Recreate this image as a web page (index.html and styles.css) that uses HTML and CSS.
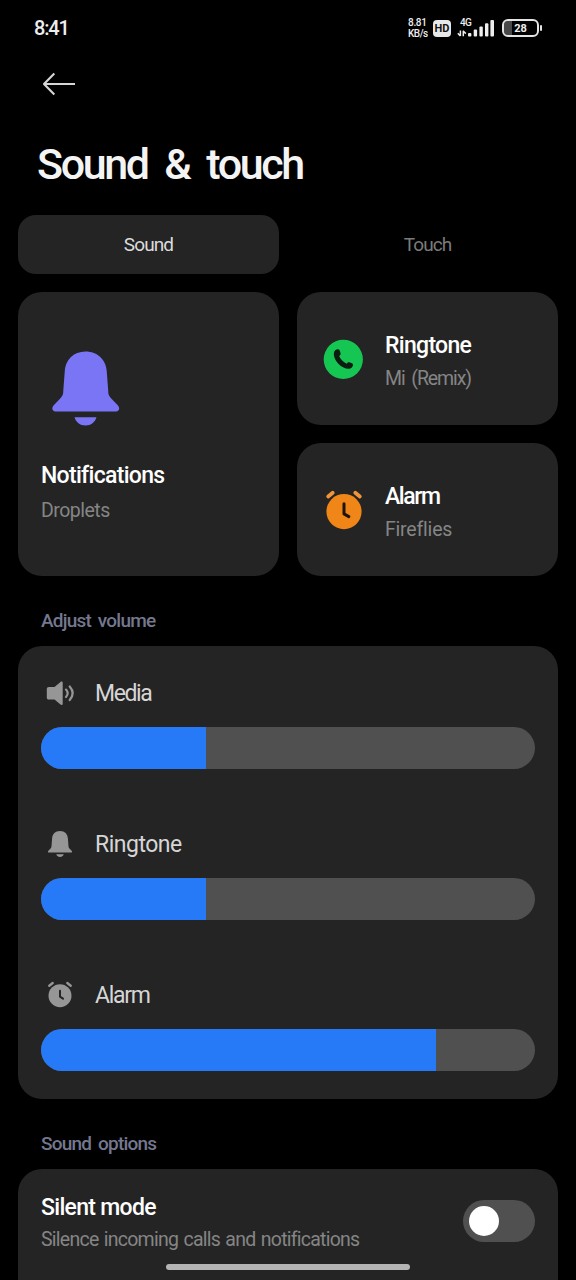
FILE: index.html
```html
<!DOCTYPE html>
<html lang="en">
<head>
<meta charset="utf-8">
<title>Sound &amp; touch</title>
<link rel="stylesheet" href="styles.css">
</head>
<body>
<div class="screen">
  <header class="status">
    <span class="clock">8:41</span>
    <div class="indicators">
      <div class="speed"><span class="speed-value">8.81</span><span>KB/s</span></div>
      <span class="hd">HD</span>
      <div class="network">
        <span class="network-type">4G</span>
        <svg class="signal" width="38" height="18" viewBox="0 0 38 18">
          <g fill="none" stroke="#eee" stroke-width="1.5"><path d="M3.400 11.500v5.500M.8 14.200l2.600 2.800M6.300 17.300v-5.500M6 11.800l2.800 2.800"/></g>
          <g fill="#eee"><rect x="11" y="14" width="3.400" height="3.600" rx="1"/><rect x="16.700" y="10.500" width="3.400" height="7.100" rx="1"/><rect x="22.400" y="7.500" width="3.400" height="10.100" rx="1"/><rect x="28" y="4.300" width="3.400" height="13.300" rx="1"/><rect x="33.400" y="1" width="3.600" height="16.600" rx="1"/></g>
        </svg>
      </div>
      <div class="battery"><span class="battery-body">28</span><span class="battery-tip"></span></div>
    </div>
  </header>

  <nav class="back">
    <svg width="34" height="24" viewBox="0 0 34 24" fill="none" stroke="#d6d6d6" stroke-width="2.100" stroke-linejoin="round"><path d="M33 12H2M12.300 1.400 2 12l10.300 10.600"/></svg>
  </nav>
  <h1 class="title">Sound &amp; touch</h1>

  <div class="tabs">
    <span class="tab tab-active">Sound</span>
    <span class="tab">Touch</span>
  </div>

  <main>
    <div class="tiles">
      <section class="card tile-large">
        <svg class="bell-large" width="68" height="76" viewBox="0 0 68 76" fill="#7a75f4"><path d="M33.500 1.500C21.500 1.500 13 10 12.700 22L11.300 40.500C11.300 44.500 10.500 46 8 48.700L1.500 55.500C-.8 58.500.5 61.500 3.500 61.500h60.500c3 0 4.300-3 2-6L59.500 48.700C57 46 56.200 44.500 56.200 40.500L54.800 22C54.500 10 45.500 1.500 33.500 1.500ZM22.500 67.300h22C43 72.400 39 75.500 33.500 75.500s-9.500-3.100-11-8.200Z"/></svg>
        <div class="name">Notifications</div>
        <div class="sub">Droplets</div>
      </section>
      <section class="card tile">
        <svg width="40" height="40" viewBox="0 0 40 40"><circle cx="20.300" cy="20.400" r="19.600" fill="#16c653"/><path fill="#0b1d10" d="M12.200 11.300c1.800-1.600 3.800-1.400 4.600.4l.7 2.200c.4 1.500-.2 2.300-1.400 3.200 1.600 3.400 4.200 6 7.600 7.600.9-1.400 1.900-1.700 3.300-1.200l2 .7c1.600.7 1.300 2.600-.2 4.300-2.800 2.600-8.700.9-12.900-3.300-4.400-4.300-6.700-10.600-3.700-13.900Z"/></svg>
        <div class="tile-text"><div class="name name-ringtone">Ringtone</div><div class="sub sub-mi">Mi (Remix)</div></div>
      </section>
      <section class="card tile">
        <svg width="40" height="40" viewBox="0 0 40 40"><circle cx="21" cy="21.600" r="17.600" fill="#ef8617"/><g fill="none"><path stroke="#ef9438" stroke-width="3.800" stroke-linecap="round" d="m5.200 6.500 4.500-3.700m27.100 3.700-4.500-3.700"/><path stroke="#1d130a" stroke-width="3" stroke-linecap="round" stroke-linejoin="round" d="M21 13.700v10.200l4.800 2.700"/></g></svg>
        <div class="tile-text"><div class="name name-alarm">Alarm</div><div class="sub sub-fireflies">Fireflies</div></div>
      </section>
    </div>

    <h2 class="label">Adjust volume</h2>
    <section class="card volumes">
      <div class="volume">
        <div class="volume-head">
          <svg width="38" height="30" viewBox="0 0 38 30"><path fill="#969696" d="M8 9h5.500l6-5c1-.8 2.200-.5 2.200.8v21c0 1.300-1.200 1.600-2.200.8l-6-5H8c-1.500 0-2.200-.8-2.200-2.200v-8.200C5.800 9.800 6.500 9 8 9Z"/><path fill="none" stroke="#969696" stroke-width="2.200" stroke-linecap="round" d="M25 11.600q3.400 3.700 0 7.400M28.700 8.500q6 6.800 0 13.600"/></svg>
          <span class="volume-media">Media</span>
        </div>
        <div class="bar"><div class="fill" style="width:33.400%"></div></div>
      </div>
      <div class="volume">
        <div class="volume-head">
          <svg width="38" height="30" viewBox="0 0 38 30" fill="#969696"><path d="M19 2c-4.800 0-7.700 3-7.900 7.500L10.500 17c0 1.300-.4 2-1.200 2.800l-1.900 1.900C6.500 22.800 7 23.500 8 23.500h22c1 0 1.500-.7.600-1.800l-1.900-1.900c-.8-.8-1.200-1.500-1.200-2.800L26.900 9.500C26.700 5 23.800 2 19 2ZM15.200 25.200h7.600c-.8 1.800-2 2.700-3.800 2.700s-3-.9-3.800-2.700Z"/></svg>
          <span class="volume-ringtone">Ringtone</span>
        </div>
        <div class="bar"><div class="fill" style="width:33.400%"></div></div>
      </div>
      <div class="volume">
        <div class="volume-head">
          <svg width="38" height="30" viewBox="0 0 38 30"><circle cx="19" cy="15.700" r="11.500" fill="#969696"/><path fill="none" stroke="#969696" stroke-width="2.400" stroke-linecap="round" d="m8.300 5.700 3.400-2.700m18 2.700L26.300 3"/><path fill="none" stroke="#242424" stroke-width="2" stroke-linecap="round" stroke-linejoin="round" d="M19 10.700v6l3 1.900"/></svg>
          <span class="volume-alarm">Alarm</span>
        </div>
        <div class="bar"><div class="fill" style="width:80%"></div></div>
      </div>
    </section>

    <h2 class="label">Sound options</h2>
    <section class="card option">
      <div>
        <div class="name">Silent mode</div>
        <div class="sub sub-silence">Silence incoming calls and notifications</div>
      </div>
      <div class="toggle"><div class="knob"></div></div>
    </section>
  </main>
  <div class="home-bar"></div>
</div>
</body>
</html>
```
FILE: styles.css
```css
* { box-sizing: border-box; }
body { margin: 0; background: #000; font-family: Roboto, "Noto Sans", sans-serif; }
svg { display: block; flex: none; }
.screen { position: relative; height: 1280px; overflow: hidden; padding: 0 18px; color: #fff; white-space: nowrap; }

.status { display: flex; justify-content: space-between; align-items: center; height: 56px; padding: 0 16px; }
.clock { font-size: 20px; font-weight: 500; letter-spacing: -1.200px; color: #eee; }
.indicators { display: flex; align-items: center; color: #eee; }
.speed { display: flex; flex-direction: column; width: 25px; font-size: 10px; line-height: 11px; font-weight: 500; letter-spacing: -.5px; }
.speed-value { letter-spacing: -.3px; }
.hd { width: 18px; height: 17px; border-radius: 4px; background: #e8e8e8; color: #111; font-size: 11px; font-weight: 700; line-height: 17px; text-align: center; }
.network { position: relative; width: 38px; height: 18px; margin-left: 6px; }
.network-type { position: absolute; left: 3px; top: -1px; font-size: 10px; line-height: 10px; font-weight: 500; letter-spacing: -.7px; }
.battery { display: flex; align-items: center; gap: 1px; margin-left: 7px; }
.battery-body { width: 37px; height: 18px; border: 2px solid #e4e4e4; border-radius: 6px; background: linear-gradient(90deg, #484848 8px, #000 8px) padding-box; font-size: 11px; font-weight: 700; line-height: 15px; text-align: center; }
.battery-tip { width: 2px; height: 6px; border-radius: 1px; background: #e4e4e4; }

.back { display: flex; align-items: center; height: 56px; padding-left: 24px; }
.title { margin: 27px 0 26px; padding-left: 19px; font-size: 43px; line-height: 50px; font-weight: 500; letter-spacing: -2.400px; word-spacing: 8.500px; color: #f4f4f4; }

.tabs { display: grid; grid-template-columns: 1fr 1fr; gap: 18px; height: 58.500px; }
.tab { border-radius: 18px; font-size: 19px; line-height: 59px; letter-spacing: -.9px; text-align: center; color: #7b7b7b; }
.tab-active { background: #242424; color: #dcdcdc; }

.card { background: #242424; border-radius: 24px; }
.tiles { display: grid; grid-template: 133px 133px / 1fr 1fr; gap: 18px; margin-top: 18.500px; }
.tile-large { grid-row: span 2; padding: 58px 23px 0; }
.bell-large { margin-left: 11px; }
.tile-large .name { margin-top: 36px; }
.tile-large .sub { margin-top: 7px; }
.tile { display: flex; align-items: center; gap: 22px; padding-left: 26px; }
.tile-text { padding-top: 7px; }
.tile .sub { margin-top: 5px; }
.name { font-size: 23px; line-height: 28px; font-weight: 500; letter-spacing: -.7px; }
.name-alarm { letter-spacing: -1.400px; }
.sub { font-size: 19.500px; line-height: 28px; letter-spacing: -.5px; color: #858585; }
.sub-mi { letter-spacing: -1.100px; word-spacing: 3px; }
.sub-fireflies { letter-spacing: -.2px; }
.sub-silence { letter-spacing: -.75px; word-spacing: 1.200px; }

.label { margin: 31px 0 11px; padding-left: 23px; font-size: 19px; line-height: 28px; font-weight: 500; letter-spacing: -.8px; word-spacing: 3px; color: #74788f; }

.volumes { display: flex; flex-direction: column; gap: 59px; height: 453px; padding: 31px 23px 0; }
.volume-head { display: flex; align-items: center; gap: 16px; height: 32px; margin-bottom: 18px; font-size: 23px; letter-spacing: -.5px; color: #d6d6d6; }
.volume-head span { padding-top: 1px; }
.volume-media { letter-spacing: -1.400px; }
.volume-alarm { letter-spacing: -1.300px; }
.bar { height: 42px; border-radius: 21px; overflow: hidden; background: #505050; }
.fill { height: 100%; background: #277af7; }

.option { display: flex; justify-content: space-between; align-items: flex-start; height: 140px; padding: 25px 23px 0; }
.option .sub { margin-top: 4px; }
.toggle { width: 72px; height: 42px; margin-top: 6px; padding: 6px; border-radius: 21px; background: #505050; }
.knob { width: 30px; height: 30px; border-radius: 50%; background: #fff; }
.home-bar { position: absolute; left: 166px; top: 1264px; width: 244px; height: 6px; border-radius: 3px; background: #b4b4b4; }
```
